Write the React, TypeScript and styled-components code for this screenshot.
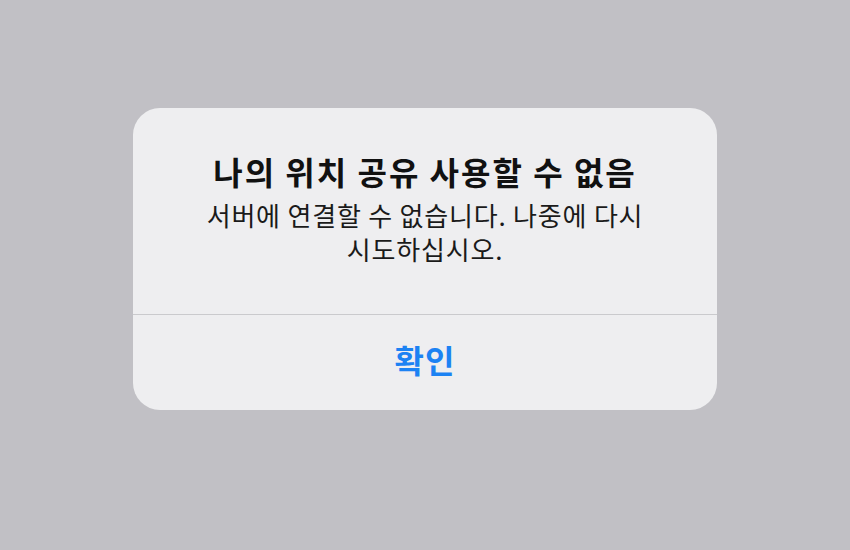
import styled, { createGlobalStyle } from 'styled-components';

const GlobalStyle = createGlobalStyle`
  html, body {
    margin: 0;
    padding: 0;
    background: #c1c0c5;
  }
  body {
    font-family: "Noto Sans CJK KR", "Noto Sans", sans-serif;
    -webkit-font-smoothing: antialiased;
  }
`;

const Screen = styled.div`
  width: 850px;
  height: 550px;
  display: flex;
  justify-content: center;
  padding-top: 108px;
  box-sizing: border-box;
`;

const Alert = styled.div`
  width: 584px;
  height: 302px;
  background: #eeeef0;
  border-radius: 27px;
  display: flex;
  flex-direction: column;
  overflow: hidden;
`;

const Content = styled.div`
  padding: 43px 56px 0;
  height: 207px;
  box-sizing: border-box;
  text-align: center;
  border-bottom: 1px solid #cacacd;
  word-break: keep-all;
`;

const Title = styled.h2`
  margin: 0 0 7px;
  font-size: 32px;
  line-height: 40px;
  font-weight: 700;
  color: #111111;
  letter-spacing: 2px;
`;

const Message = styled.p`
  margin: 0;
  font-size: 26px;
  line-height: 34px;
  font-weight: 400;
  color: #1a1a1a;
  letter-spacing: 0.8px;
`;

const ActionButton = styled.button`
  flex: 1;
  border: none;
  background: transparent;
  font-family: inherit;
  font-size: 32px;
  font-weight: 700;
  color: #1c82f3;
  cursor: pointer;
  padding: 0 0 7px;
  letter-spacing: 1px;
`;

export default function App() {
  return (
    <>
      <GlobalStyle />
      <Screen>
        <Alert role="alertdialog">
          <Content>
            <Title>나의 위치 공유 사용할 수 없음</Title>
            <Message>서버에 연결할 수 없습니다. 나중에 다시 시도하십시오.</Message>
          </Content>
          <ActionButton>확인</ActionButton>
        </Alert>
      </Screen>
    </>
  );
}
